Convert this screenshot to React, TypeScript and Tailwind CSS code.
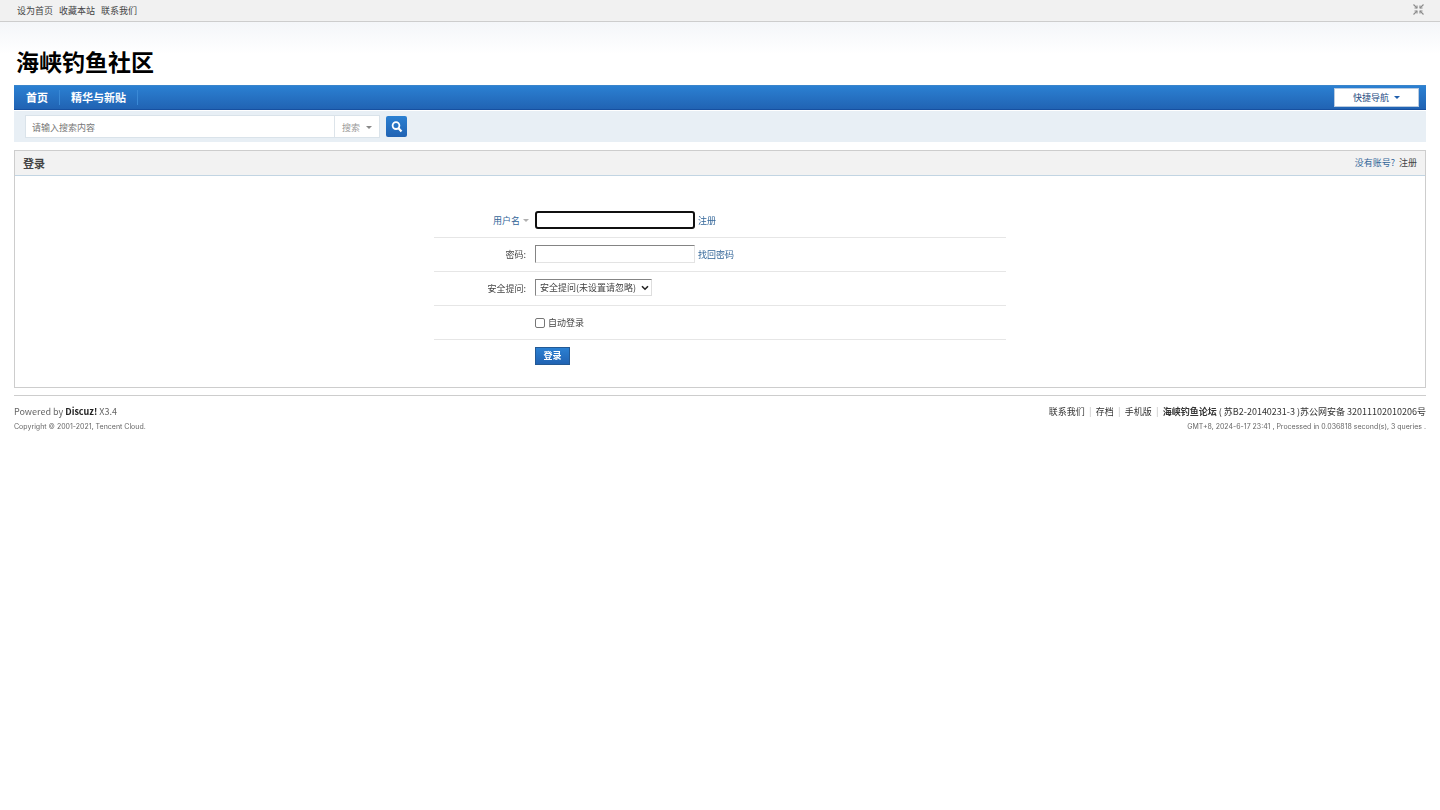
import React from 'react';

const topLinks = ['设为首页', '收藏本站', '联系我们'];
const navLinks = ['首页', '精华与新贴'];
const footerLinks = ['联系我们', '存档', '手机版'];

interface CaretProps {
  className?: string;
}

const Caret: React.FC<CaretProps> = ({ className }) => (
  <svg viewBox="0 0 6 3" className={`w-[6px] h-[3px] shrink-0 ${className ?? ''}`} fill="currentColor" aria-hidden="true">
    <path d="M0 0h6L3 3z" />
  </svg>
);

interface RowProps {
  label?: React.ReactNode;
  last?: boolean;
  children: React.ReactNode;
}

const FormRow: React.FC<RowProps> = ({ label, last, children }) => (
  <div className={`flex items-center ${last ? 'h-8' : 'h-[34px] border-b border-[#e6e6e6]'}`}>
    <div className="w-[101px] pr-[9px] shrink-0 flex justify-end">{label}</div>
    <div className="flex items-center gap-[3px]">{children}</div>
  </div>
);

const TopBar: React.FC = () => (
  <div className="flex items-center justify-between h-[22px] pl-[17px] pr-4 bg-[#f1f1f1] border-b border-[#cdcdcd]">
    <div className="flex gap-[6px]">
      {topLinks.map((text) => (
        <a key={text} href="#">{text}</a>
      ))}
    </div>
    <button type="button" aria-label="切换到窄版" className="pb-[2px] text-[#8c8c8c]">
      <svg viewBox="0 0 11 11" className="w-[11px] h-[11px] block" fill="none" stroke="currentColor" strokeWidth="1.1">
        <path d="M.5.5 4 4M10.5.5 7 4M.5 10.5 4 7M10.5 10.5 7 7" />
        <path d="M1.5 4h2.5V1.5M9.5 4H7V1.5M1.5 7H4v2.5M9.5 7H7v2.5" />
      </svg>
    </button>
  </div>
);

const NavBar: React.FC = () => (
  <nav className="flex items-center justify-between h-[25px] pl-px pr-[7px] border-t border-[#3a85cb] border-b border-b-[#1750a0] bg-linear-to-b from-[#2b80d2] to-[#2163b3]">
    <div className="flex items-center text-white font-bold text-[11px]">
      {navLinks.map((text) => (
        <a key={text} href="#" className="h-[15px] leading-[15px] px-[11px] border-r border-[#3a89d6]">{text}</a>
      ))}
    </div>
    <button type="button" className="flex items-center justify-center gap-[5px] w-[85px] h-[19px] bg-white text-[#254b7f] border border-[#b9cbe0]">
      快捷导航
      <Caret className="text-[#1f5eac]" />
    </button>
  </nav>
);

const SearchBar: React.FC = () => (
  <form className="flex items-center gap-[6px] h-[31px] mt-px px-[11px] bg-[#e8eff5]" onSubmit={(e) => e.preventDefault()}>
    <div className="flex h-[23px] w-[355px] bg-white border border-[#dae3ea]">
      <input
        type="text"
        aria-label="请输入搜索内容"
        placeholder="请输入搜索内容"
        className="flex-1 min-w-0 px-[6px] pt-[2px] outline-none placeholder:text-[#777]"
      />
      <button type="button" className="flex items-center justify-center gap-[6px] w-[45px] pt-[2px] border-l border-[#dde4ea] text-[#999]">
        搜索
        <Caret className="text-[#888]" />
      </button>
    </div>
    <button type="submit" aria-label="搜索" className="flex items-center justify-center w-[21px] h-[21px] rounded-xs bg-linear-to-b from-[#2b80d2] to-[#2163b3]">
      <svg viewBox="0 0 12 12" className="w-3 h-3" fill="none" stroke="#fff" strokeWidth="1.8">
        <circle cx="5" cy="4.6" r="3.4" />
        <path d="m7.5 7.2 3 3.2" strokeWidth="2.2" />
      </svg>
    </button>
  </form>
);

const LoginPanel: React.FC = () => (
  <main className="mt-2 border border-[#cdcdcd]">
    <div className="flex items-center justify-between h-[25px] px-2 bg-[#f2f2f2] border-b border-b-[#c2d5e3]">
      <h1 className="text-[11px] font-bold">登录</h1>
      <p className="flex gap-1">
        <a href="#" className="text-[#336699]">没有账号?</a>
        <a href="#">注册</a>
      </p>
    </div>
    <form className="w-[572px] mx-auto pt-7 pb-[15px]" onSubmit={(e) => e.preventDefault()}>
      <FormRow
        label={
          <label htmlFor="username" className="flex items-center gap-[3px] -mr-[3px] text-[#336699]">
            用户名
            <Caret className="text-[#b0b0b0]" />
          </label>
        }
      >
        <input id="username" type="text" autoFocus className="w-40 h-[18px] mb-px px-[2px] rounded-[3px] border-2 border-[#101010] outline-none" />
        <a href="#" className="text-[#336699]">注册</a>
      </FormRow>
      <FormRow label={<label htmlFor="password">密码:</label>}>
        <input id="password" type="password" className="w-40 h-[18px] mb-px px-[2px] border border-[#e3e3e3] border-t-[#848484] border-l-[#848484] outline-none" />
        <a href="#" className="text-[#336699]">找回密码</a>
      </FormRow>
      <FormRow label={<label htmlFor="question">安全提问:</label>}>
        <div className="relative flex items-center mb-[2px]">
          <select id="question" className="appearance-none w-[117px] h-[17px] pl-1 bg-white border border-[#dedede] border-t-[#848484] border-l-[#848484]">
            <option>安全提问(未设置请忽略)</option>
          </select>
          <svg viewBox="0 0 8 6" className="absolute right-[3px] w-2 h-[6px] pointer-events-none" fill="none" stroke="#222" strokeWidth="1.6">
            <path d="m1 1.2 3 3 3-3" />
          </svg>
        </div>
      </FormRow>
      <FormRow>
        <input id="auto" type="checkbox" className="appearance-none w-[10px] h-[10px] rounded-xs border border-[#767676] bg-white checked:bg-[#2b80d2]" />
        <label htmlFor="auto">自动登录</label>
      </FormRow>
      <FormRow last>
        <button type="submit" className="w-[35px] h-[18px] mb-px border border-[#235994] bg-linear-to-b from-[#2b80d2] to-[#2163b3] text-white font-bold leading-4">
          登录
        </button>
      </FormRow>
    </form>
  </main>
);

const Footer: React.FC = () => (
  <footer className="flex justify-between mt-[7px] pt-[9px] border-t border-[#cdcdcd] text-[#666]">
    <div>
      <p className="leading-[14px]">
        Powered by <a href="#" className="font-bold text-[#222]">Discuz!</a> X3.4
      </p>
      <p className="text-[7px] leading-4 font-[Inter,sans-serif]">Copyright © 2001-2021, Tencent Cloud.</p>
    </div>
    <div className="text-right">
      <p className="flex justify-end leading-[14px] text-[#333]">
        {footerLinks.map((text) => (
          <React.Fragment key={text}>
            <a href="#">{text}</a>
            <span className="w-[11px] text-center text-[#bbb]">|</span>
          </React.Fragment>
        ))}
        <a href="#" className="font-bold">海峡钓鱼论坛</a>
        <span className="whitespace-pre"> ( <a href="#">苏B2-20140231-3</a> )</span>
        <a href="#">苏公网安备 32011102010206号</a>
      </p>
      <p className="text-[7px] leading-4 font-[Inter,sans-serif]">
        GMT+8, 2024-6-17 23:41 , Processed in 0.036818 second(s), 3 queries .
      </p>
    </div>
  </footer>
);

export default function App() {
  return (
    <div className="bg-white text-[#444] text-[9px] leading-[14px] font-['Noto_Sans_CJK_SC',sans-serif]">
      <TopBar />
      <div className="px-[14px] bg-linear-to-b from-[#f4f6f9] to-white to-[32px]">
        <header className="flex items-center h-[63px] pt-[14px] pl-[2px]">
          <a href="#" className="text-[23px] leading-8 font-bold text-black">海峡钓鱼社区</a>
        </header>
        <NavBar />
        <SearchBar />
        <LoginPanel />
        <Footer />
      </div>
    </div>
  );
}
